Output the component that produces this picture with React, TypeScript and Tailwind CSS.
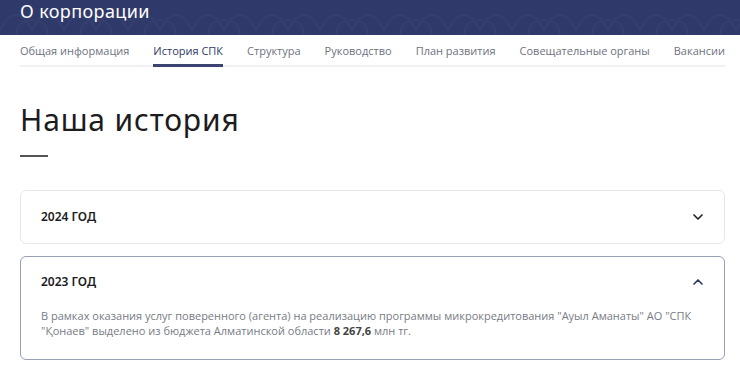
import { ChevronDown, ChevronUp } from "lucide-react";

const tabs = [
  "Общая информация",
  "История СПК",
  "Структура",
  "Руководство",
  "План развития",
  "Совещательные органы",
  "Вакансии",
];

const HeaderPattern = () => (
  <svg className="absolute inset-0 h-full w-full" aria-hidden="true">
    <defs>
      <pattern id="orn" width="64" height="36" patternUnits="userSpaceOnUse">
        <path
          d="M0 30 C10 10, 22 10, 32 30 C42 10, 54 10, 64 30 M16 36 C16 24, 24 20, 32 20 C40 20, 48 24, 48 36"
          fill="none"
          stroke="#ffffff"
          strokeOpacity="0.025"
          strokeWidth="2"
        />
      </pattern>
    </defs>
    <rect width="100%" height="100%" fill="url(#orn)" />
  </svg>
);

export default function App() {
  return (
    <div className="min-h-screen bg-white font-['Open_Sans',sans-serif]">
      <div className="relative h-[35px] overflow-hidden bg-[#2f3a6a]">
        <HeaderPattern />
        <div className="relative px-5 pt-[0px] font-['Noto_Sans',sans-serif] text-[18px] leading-[22px] tracking-[0.4px] text-white">
          О корпорации
        </div>
      </div>

      <div className="pl-5 pr-[15px]">
        <nav className="flex justify-between border-b-2 border-[#f1f1f3] pt-[8px] text-[11px] leading-[15px] text-[#6e7280]">
          {tabs.map((t) => (
            <div
              key={t}
              className={
                t === "История СПК"
                  ? "-mb-[2px] border-b-[3px] border-[#3b4470] pb-[6px] text-[#2e3866]"
                  : "pb-[7px]"
              }
            >
              {t}
            </div>
          ))}
        </nav>

        <h1 className="mt-[35px] font-['Noto_Sans',sans-serif] text-[30px] leading-[36px] tracking-[0.85px] text-[#1c1c1e]">
          Наша история
        </h1>
        <div className="mt-[17px] h-[2px] w-[28px] bg-[#555]" />

        <div className="mt-[33px] flex h-[54px] items-center justify-between rounded-[6px] border border-[#e6e7ea] pl-5 pr-[18px]">
          <span className="font-['Noto_Sans',sans-serif] text-[12px] font-semibold text-[#1c1c1e]">2024 ГОД</span>
          <ChevronDown size={16} strokeWidth={2.5} className="text-[#222]" />
        </div>

        <div className="mt-3 rounded-[6px] border border-[#9a9fb5] px-5 pb-[21px]">
          <div className="-mr-[2px] flex h-[50px] items-center justify-between">
            <span className="font-['Noto_Sans',sans-serif] text-[12px] font-semibold text-[#1c1c1e]">2023 ГОД</span>
            <ChevronUp size={16} strokeWidth={2.5} className="text-[#2e3866]" />
          </div>
          <p className="mt-[1px] text-[11px] leading-[15px] text-[#777b85]">
            В рамках оказания услуг поверенного (агента) на реализацию программы микрокредитования "Ауыл Аманаты" АО "СПК
            "Қонаев" выделено из бюджета Алматинской области <b className="font-bold text-[#444]">8 267,6</b> млн тг.
          </p>
        </div>
      </div>
    </div>
  );
}
